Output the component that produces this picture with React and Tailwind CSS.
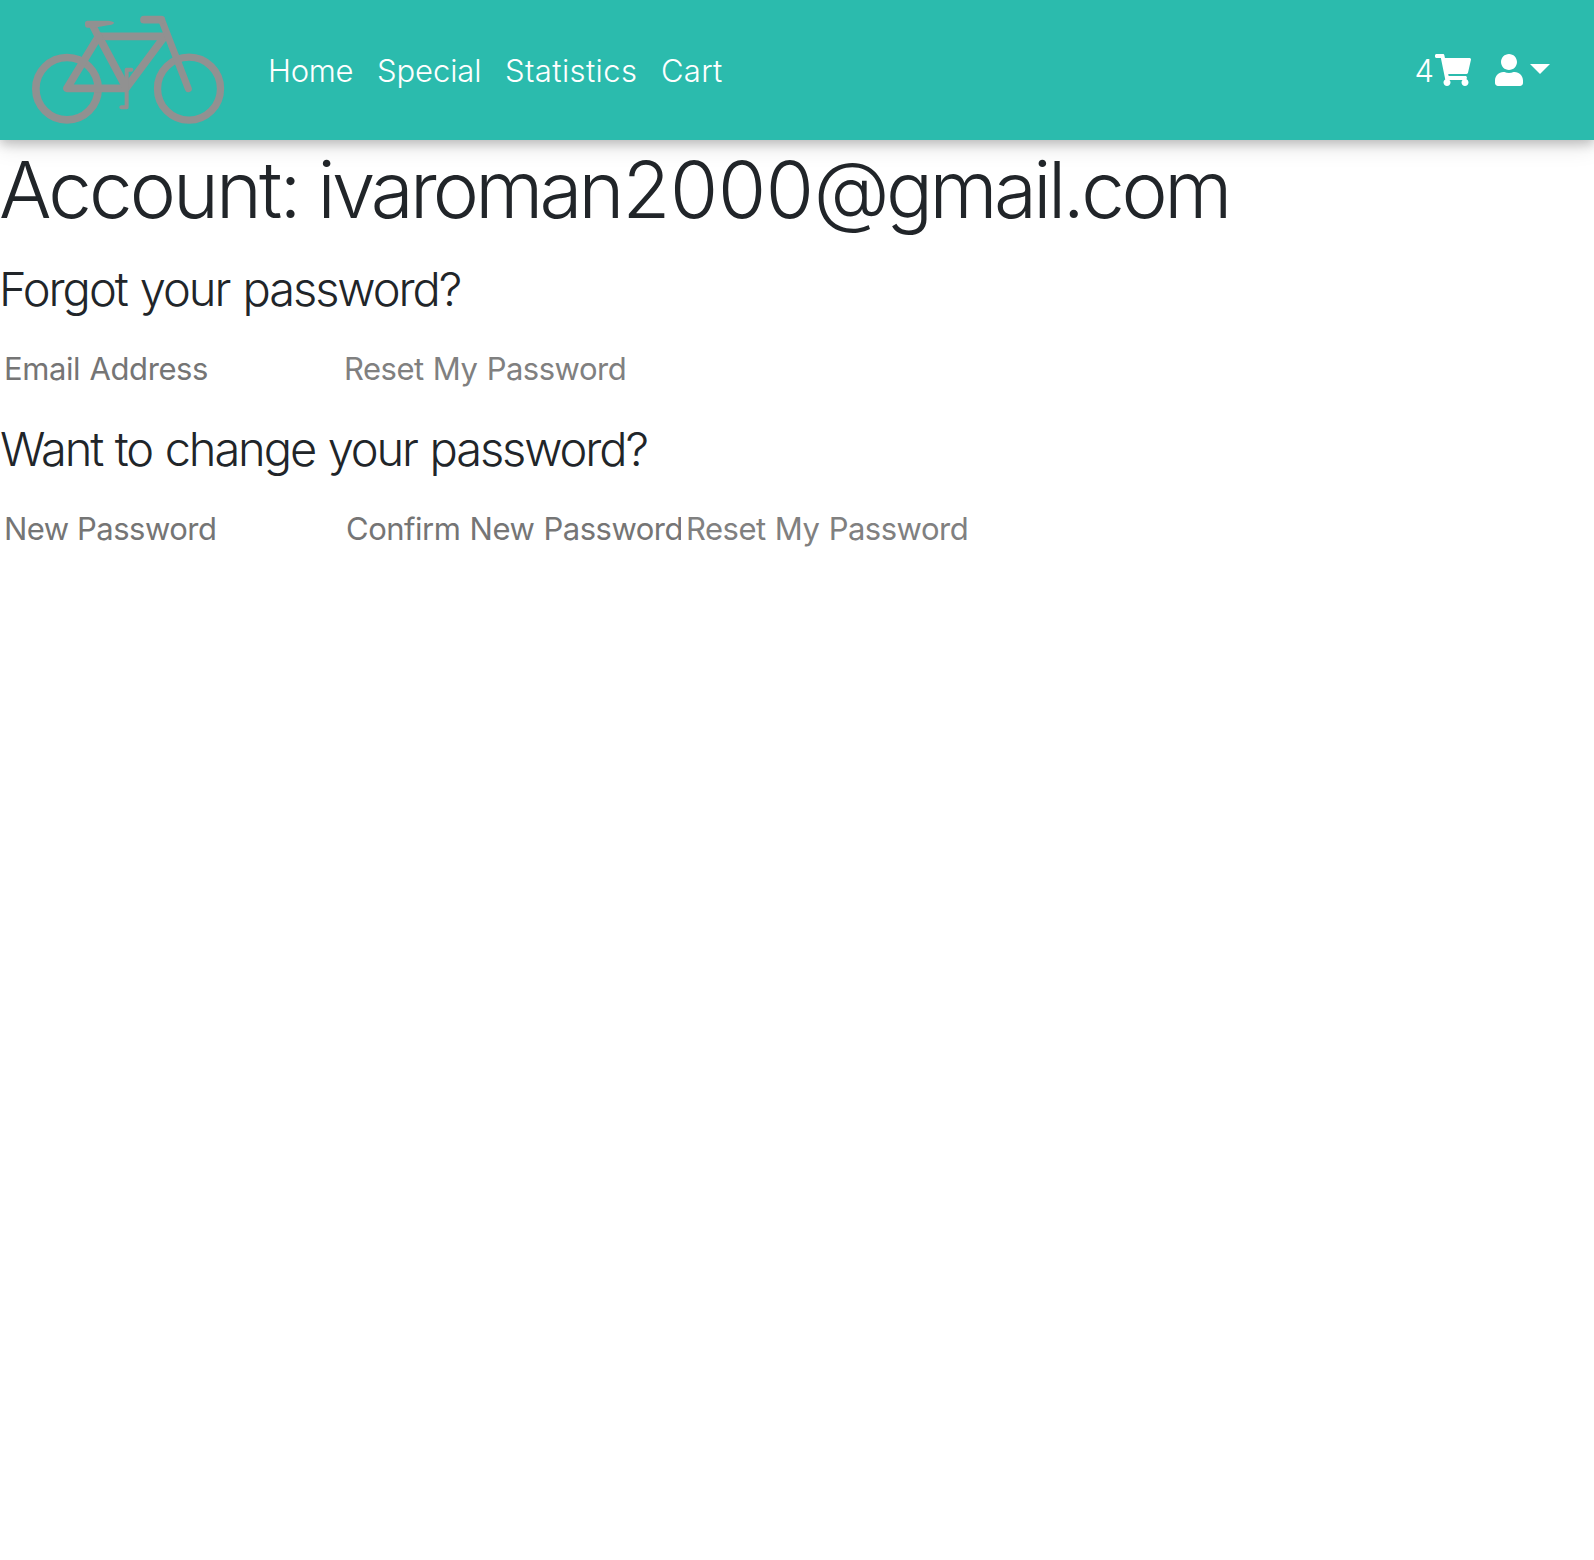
import { FaShoppingCart, FaUser } from "react-icons/fa";

function BikeLogo() {
  return (
    <svg
      className="block h-[140px] w-[220px] shrink-0"
      viewBox="0 0 660 420"
      fill="none"
      stroke="#919191"
      strokeWidth="23"
      strokeLinejoin="round"
      strokeLinecap="round"
    >
      <circle cx="141" cy="266" r="93.5" />
      <circle cx="507" cy="266" r="94.5" strokeWidth="22" />
      <path d="M141 265H318L434 109H236L141 265" />
      <path d="M236 109L318 262" />
      <path d="M425 60L505 266" strokeWidth="21" />
      <path d="M372 59H424" />
      <path d="M218 76L238 116" strokeWidth="22" />
      <path
        d="M203 62H266Q282 64 282 69Q280 74 264 76L222 83H203Q195 83 195 74V70Q195 62 203 62Z"
        fill="#919191"
        stroke="none"
      />
      <path d="M334 209H320V322H304" strokeWidth="12" />
    </svg>
  );
}

function Placeholder({ className, children }) {
  return (
    <div className={`shrink-0 overflow-hidden whitespace-nowrap text-[#757575] ${className}`}>
      {children}
    </div>
  );
}

export default function App() {
  return (
    <div className="min-h-[1560px] overflow-hidden bg-white font-['Inter',sans-serif] font-light text-[#212529]">
      <nav className="flex h-[140px] items-center bg-[#2bbbad] pl-5 text-[31px] leading-[48px] whitespace-nowrap text-white shadow-[0_4px_10px_0_rgba(0,0,0,0.2),0_8px_20px_0_rgba(0,0,0,0.1)]">
        <BikeLogo />
        <div className="ml-[28px] flex pt-0.5">
          <a className="w-[109px] tracking-[-0.3px]">Home</a>
          <a className="w-[128px] tracking-[-0.1px]">Special</a>
          <a className="w-[156px] tracking-[0.4px]">Statistics</a>
          <a className="tracking-[0.3px]">Cart</a>
        </div>
        <div className="mr-11 ml-auto flex items-center">
          <span className="pt-0.5">4</span>
          <FaShoppingCart className="ml-[0.5px] h-8 w-9" />
          <FaUser className="ml-6 h-8 w-7" />
          <span className="mb-0.5 ml-[7.5px] border-x-[10px] border-t-[10px] border-x-transparent border-t-white" />
        </div>
      </nav>
      <main className="whitespace-nowrap">
        <h1 className="-ml-px h-[96px] pt-[2px] text-[78px] leading-[96px]">
          <span className="tracking-[-2.9px]">Account: </span>
          <span className="tracking-[-3.8px]">ivaroma</span>
          <span className="tracking-[-2px]">n</span>
          <span className="tracking-[-0.3px]">2000</span>
          <span className="tracking-[-3.5px]">@gmail.com</span>
        </h1>
        <h4 className="mt-[24px] -ml-px text-[47px] leading-[58px] tracking-[-2.05px] [word-spacing:2px]">
          Forgot your password?
        </h4>
        <div className="mt-[27px] flex text-[31px] leading-[48px] font-normal">
          <Placeholder className="w-[344px] pl-1 tracking-[-0.4px] [word-spacing:1px]">Email Address</Placeholder>
          <span className="tracking-[-0.5px] text-[#808080] [word-spacing:1px]">Reset My Password</span>
        </div>
        <h4 className="mt-[27px] text-[47px] leading-[58px] tracking-[-2.1px] [word-spacing:1.5px]">
          Want to change your password?
        </h4>
        <div className="mt-[27px] flex text-[31px] leading-[48px] font-normal">
          <Placeholder className="w-[346px] pl-1 tracking-[-0.5px]">New Password</Placeholder>
          <Placeholder className="w-[335px] tracking-[-0.5px] [word-spacing:1px]">Confirm New Password</Placeholder>
          <span className="ml-[5px] tracking-[-0.5px] text-[#808080] [word-spacing:1px]">Reset My Password</span>
        </div>
      </main>
    </div>
  );
}
